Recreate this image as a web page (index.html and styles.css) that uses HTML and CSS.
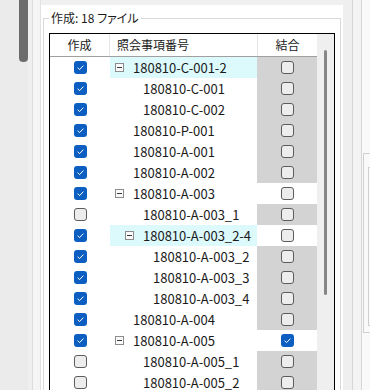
FILE: index.html
```html
<!DOCTYPE html>
<html lang="ja">
<head>
<meta charset="utf-8">
<link rel="stylesheet" href="styles.css">
</head>
<body>
<div class="page">
  <div class="lscroll"><div class="lthumb"></div></div>
  <div class="lgap"></div>
  <div class="lstrip"></div>
  <div class="main">
    <fieldset class="group">
      <legend class="title">作成: 18 ファイル</legend>
      <div class="grid">
        <div class="tbl">
          <div class="hdr">
            <div class="c1">作成</div>
            <div class="c2">照会事項番号</div>
            <div class="c3">結合</div>
          </div>

          <div class="row">
            <div class="c1"><span class="cb on"><svg viewBox="0 0 13 13"><path d="M3.6 6.7 5.6 8.6 9.4 4.6"/></svg></span></div>
            <div class="c2 sel lv0"><span class="exp"></span><span class="txt">180810-C-001-2</span></div>
            <div class="c3 gray"><span class="cb"></span></div>
          </div>
          <div class="row">
            <div class="c1"><span class="cb on"><svg viewBox="0 0 13 13"><path d="M3.6 6.7 5.6 8.6 9.4 4.6"/></svg></span></div>
            <div class="c2 lv1"><span class="noexp"></span><span class="txt">180810-C-001</span></div>
            <div class="c3 gray"><span class="cb"></span></div>
          </div>
          <div class="row">
            <div class="c1"><span class="cb on"><svg viewBox="0 0 13 13"><path d="M3.6 6.7 5.6 8.6 9.4 4.6"/></svg></span></div>
            <div class="c2 lv1"><span class="noexp"></span><span class="txt">180810-C-002</span></div>
            <div class="c3 gray"><span class="cb"></span></div>
          </div>
          <div class="row">
            <div class="c1"><span class="cb on"><svg viewBox="0 0 13 13"><path d="M3.6 6.7 5.6 8.6 9.4 4.6"/></svg></span></div>
            <div class="c2 lv0"><span class="noexp"></span><span class="txt">180810-P-001</span></div>
            <div class="c3 gray"><span class="cb"></span></div>
          </div>
          <div class="row">
            <div class="c1"><span class="cb on"><svg viewBox="0 0 13 13"><path d="M3.6 6.7 5.6 8.6 9.4 4.6"/></svg></span></div>
            <div class="c2 lv0"><span class="noexp"></span><span class="txt">180810-A-001</span></div>
            <div class="c3 gray"><span class="cb"></span></div>
          </div>
          <div class="row">
            <div class="c1"><span class="cb on"><svg viewBox="0 0 13 13"><path d="M3.6 6.7 5.6 8.6 9.4 4.6"/></svg></span></div>
            <div class="c2 lv0"><span class="noexp"></span><span class="txt">180810-A-002</span></div>
            <div class="c3 gray"><span class="cb"></span></div>
          </div>
          <div class="row">
            <div class="c1"><span class="cb on"><svg viewBox="0 0 13 13"><path d="M3.6 6.7 5.6 8.6 9.4 4.6"/></svg></span></div>
            <div class="c2 lv0"><span class="exp"></span><span class="txt">180810-A-003</span></div>
            <div class="c3"><span class="cb"></span></div>
          </div>
          <div class="row">
            <div class="c1"><span class="cb"></span></div>
            <div class="c2 lv1"><span class="noexp"></span><span class="txt">180810-A-003_1</span></div>
            <div class="c3 gray"><span class="cb"></span></div>
          </div>
          <div class="row">
            <div class="c1"><span class="cb on"><svg viewBox="0 0 13 13"><path d="M3.6 6.7 5.6 8.6 9.4 4.6"/></svg></span></div>
            <div class="c2 sel lv1"><span class="exp"></span><span class="txt">180810-A-003_2-4</span></div>
            <div class="c3"><span class="cb"></span></div>
          </div>
          <div class="row">
            <div class="c1"><span class="cb on"><svg viewBox="0 0 13 13"><path d="M3.6 6.7 5.6 8.6 9.4 4.6"/></svg></span></div>
            <div class="c2 lv2"><span class="noexp"></span><span class="txt">180810-A-003_2</span></div>
            <div class="c3 gray"><span class="cb"></span></div>
          </div>
          <div class="row">
            <div class="c1"><span class="cb on"><svg viewBox="0 0 13 13"><path d="M3.6 6.7 5.6 8.6 9.4 4.6"/></svg></span></div>
            <div class="c2 lv2"><span class="noexp"></span><span class="txt">180810-A-003_3</span></div>
            <div class="c3 gray"><span class="cb"></span></div>
          </div>
          <div class="row">
            <div class="c1"><span class="cb on"><svg viewBox="0 0 13 13"><path d="M3.6 6.7 5.6 8.6 9.4 4.6"/></svg></span></div>
            <div class="c2 lv2"><span class="noexp"></span><span class="txt">180810-A-003_4</span></div>
            <div class="c3 gray"><span class="cb"></span></div>
          </div>
          <div class="row">
            <div class="c1"><span class="cb on"><svg viewBox="0 0 13 13"><path d="M3.6 6.7 5.6 8.6 9.4 4.6"/></svg></span></div>
            <div class="c2 lv0"><span class="noexp"></span><span class="txt">180810-A-004</span></div>
            <div class="c3 gray"><span class="cb"></span></div>
          </div>
          <div class="row">
            <div class="c1"><span class="cb on"><svg viewBox="0 0 13 13"><path d="M3.6 6.7 5.6 8.6 9.4 4.6"/></svg></span></div>
            <div class="c2 lv0"><span class="exp"></span><span class="txt">180810-A-005</span></div>
            <div class="c3"><span class="cb on"><svg viewBox="0 0 13 13"><path d="M3.6 6.7 5.6 8.6 9.4 4.6"/></svg></span></div>
          </div>
          <div class="row">
            <div class="c1"><span class="cb"></span></div>
            <div class="c2 lv1"><span class="noexp"></span><span class="txt">180810-A-005_1</span></div>
            <div class="c3 gray"><span class="cb"></span></div>
          </div>
          <div class="row">
            <div class="c1"><span class="cb"></span></div>
            <div class="c2 lv1"><span class="noexp"></span><span class="txt">180810-A-005_2</span></div>
            <div class="c3 gray"><span class="cb"></span></div>
          </div>
        </div>
        <div class="vscroll"><div class="vthumb"></div></div>
      </div>
    </fieldset>
  </div>
  <div class="rstrip">
    <div class="ra"></div>
    <div class="rline"></div>
    <div class="rc"></div>
    <div class="rline"></div>
    <div class="re">
      <div class="obox"><div class="ibox"></div></div>
    </div>
  </div>
</div>
</body>
</html>
```

FILE: styles.css
```css
* { box-sizing: border-box; }
html, body {
  margin: 0;
  padding: 0;
  background: #f0f0f0;
  font-family: "Noto Sans CJK JP", "Noto Sans", sans-serif;
  color: #1b1b1b;
}
.page {
  display: flex;
  width: 370px;
  height: 390px;
  overflow: hidden;
  background: #f0f0f0;
}
.lscroll {
  width: 28px;
  flex: none;
  padding-left: 19px;
  background: #ebebeb;
}
.lthumb {
  width: 9px;
  height: 62px;
  background: #6c6c6c;
  border-radius: 0 0 4px 4px;
}
.lgap {
  width: 5px;
  flex: none;
  background: #efefef;
  border-right: 1px solid #dddddd;
}
.lstrip {
  width: 8px;
  flex: none;
  background: #f5f5f5;
  border-right: 1px solid #e2e2e2;
}
.main {
  width: 302px;
  flex: none;
  margin-top: 5px;
  background: #ffffff;
}
.group {
  margin: 5px 0 0 2px;
  width: 298px;
  padding: 7px 5px 0 5px;
  border: 1px solid #d9d9d9;
  height: 420px;
  min-width: 0;
}
.title {
  padding: 0 2px;
  font-size: 12px;
  line-height: 16px;
  font-feature-settings: "palt";
  color: #1b1b1b;
}
.grid {
  display: flex;
  width: 286px;
  border: 1px solid #000;
  height: 400px;
  background: #fff;
}
.tbl {
  width: 267px;
  flex: none;
}
.hdr {
  display: flex;
  height: 23px;
  border-bottom: 1px solid #a0a0a0;
  font-size: 12px;
  line-height: 22px;
}
.hdr .c1 {
  width: 60px;
  text-align: center;
  border-right: 1px solid #e6e6e6;
}
.hdr .c2 {
  width: 147px;
  padding-left: 7px;
}
.hdr .c3 {
  width: 60px;
  text-align: center;
  border-left: 1px solid #e6e6e6;
}
.row {
  display: flex;
  height: 21px;
  font-size: 13px;
  line-height: 21px;
}
.row .c1 {
  width: 60px;
  display: flex;
  align-items: center;
  justify-content: center;
}
.row .c2 {
  width: 147px;
  display: flex;
  align-items: center;
  white-space: nowrap;
}
.row .c3 {
  width: 60px;
  display: flex;
  align-items: center;
  justify-content: center;
  padding-left: 1px;
}
.gray { background: #d3d3d3; }
.sel { background: #dcf9fb; }
.lv0 { padding-left: 5px; }
.lv1 { padding-left: 15px; }
.lv2 { padding-left: 25px; }
.exp, .noexp {
  width: 9px;
  height: 9px;
  margin-right: 9px;
  flex: none;
}
.exp {
  border: 1px solid #8c8c8c;
  background: #fafafa;
  position: relative;
}
.exp::after {
  content: "";
  position: absolute;
  left: 1px;
  top: 3px;
  width: 5px;
  height: 1px;
  background: #3a3a3a;
}
.txt { color: #1b1b1b; }
.cb {
  display: block;
  width: 13px;
  height: 13px;
  border-radius: 3px;
  border: 1px solid #5c5c5c;
  background: #ededed;
}
.cb.on {
  border: none;
  background: #0c5fc0;
}
.cb svg {
  display: block;
  width: 13px;
  height: 13px;
  fill: none;
  stroke: #ffffff;
  stroke-width: 1;
}
.vscroll {
  width: 17px;
  flex: none;
  background: #efefef;
  padding: 16px 0 0 7px;
}
.vthumb {
  width: 3px;
  height: 245px;
  background: #868686;
  border-radius: 2px;
}
.rstrip {
  flex: 1;
  display: flex;
}
.ra { width: 9px; background: #efefef; }
.rline { width: 1px; background: #d6d6d6; }
.rc { width: 8px; background: #f3f3f3; }
.re {
  flex: 1;
  background: #f9f9f9;
  padding-top: 153px;
  padding-left: 1px;
}
.obox {
  height: 180px;
  border: 1px solid #d0d0d0;
  border-right: none;
  padding: 13px 0 6px 4px;
}
.ibox {
  height: 100%;
  border: 1px solid #d0d0d0;
  border-right: none;
}
```
